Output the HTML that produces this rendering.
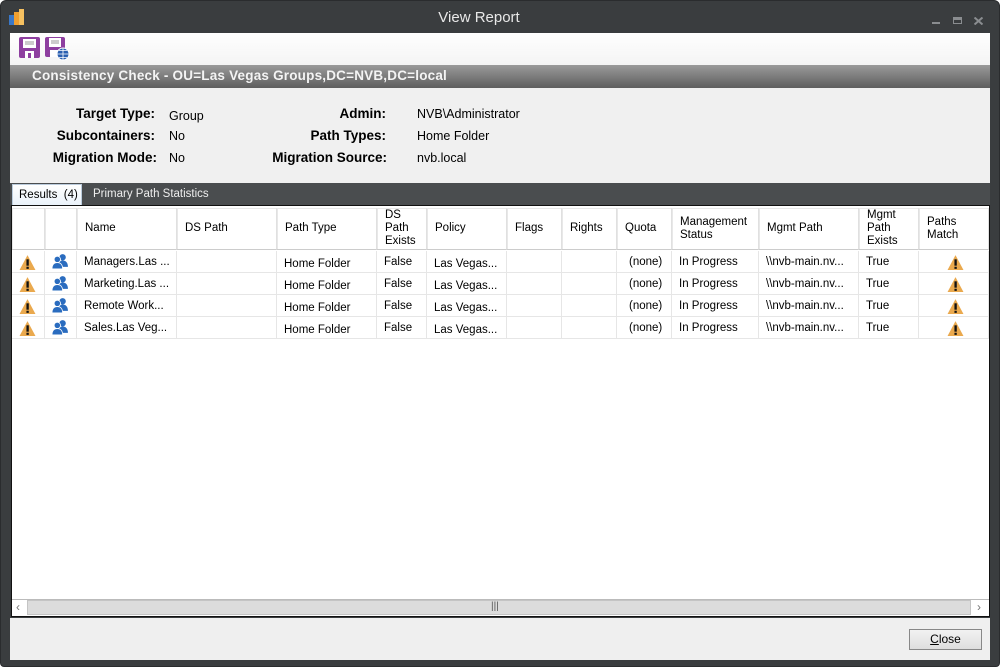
<!DOCTYPE html>
<html><head><meta charset="utf-8"><style>
*{margin:0;padding:0;box-sizing:border-box}
body{width:1002px;height:669px;background:#fff;font-family:"Liberation Sans",sans-serif;font-size:12px;color:#000;position:relative;overflow:hidden}
.a{position:absolute}
#frame{left:0;top:0;width:1000px;height:667px;background:#3a3d3f;border-radius:6px 6px 4px 4px;border:1px solid #2a2c2e}
.title{left:0;width:958px;top:9px;text-align:center;color:#e8e8e8;font-size:15px}
.lbl{font-weight:bold;font-size:13.5px;text-align:right}
.val{font-size:12.5px}
.grid{left:11px;top:205px;width:979px;height:412px;background:#fff;border:1px solid #111}
.hc{position:absolute;top:2px;height:42px;border-right:1px solid #e0e0e0;border-bottom:1px solid #ccc;background:#fff;font-size:11.5px;line-height:13px;padding-left:8px;display:flex;align-items:center;box-shadow:inset 1px 1px 0 #e8e8e8}
.c{position:absolute;height:22px;border-right:1px solid #e6e6e6;border-bottom:1px solid #e6e6e6;font-size:11.5px;padding-left:7px;line-height:22px;white-space:nowrap}
</style></head><body>
<div class="a" id="frame"></div>
<svg class="a" style="left:8px;top:8px" width="18" height="18" viewBox="0 0 18 18"><rect x="1" y="7" width="5" height="10" fill="#3a78c8"/><rect x="6" y="4" width="5" height="13" fill="#f0a030"/><rect x="11" y="1" width="5" height="16" fill="#f5c060"/></svg>
<div class="a title">View Report</div>
<div class="a" style="left:932px;top:22px;width:8px;height:2px;background:#8a8d90"></div>
<div class="a" style="left:953px;top:17px;width:9px;height:7px;border:1px solid #8a8d90;border-top-width:3px"></div>
<svg class="a" style="left:974px;top:17px" width="9" height="8" viewBox="0 0 9 8"><path d="M0.5 0.5L8.5 7.5M8.5 0.5L0.5 7.5" stroke="#8a8d90" stroke-width="2"/></svg>
<div class="a" style="left:10px;top:33px;width:980px;height:32px;background:linear-gradient(#fff,#f4f4f4)"></div>
<svg class="a" style="left:18px;top:36px" width="24" height="24" viewBox="0 0 24 24"><rect x="1" y="1" width="21" height="21" rx="2" fill="#8e3fa0"/><rect x="5" y="3" width="13" height="9" fill="#fff"/><line x1="7" y1="6" x2="16" y2="6" stroke="#999"/><line x1="7" y1="8" x2="16" y2="8" stroke="#999"/><rect x="7" y="15" width="9" height="7" fill="#fff"/><rect x="10" y="17" width="3" height="5" fill="#8e3fa0"/></svg>
<svg class="a" style="left:44px;top:35px" width="26" height="26" viewBox="0 0 26 26"><rect x="1" y="2" width="20" height="20" rx="2" fill="#8e3fa0"/><rect x="5" y="3" width="12" height="9" fill="#fff"/><line x1="7" y1="6" x2="15" y2="6" stroke="#999"/><line x1="7" y1="8" x2="15" y2="8" stroke="#999"/><rect x="6" y="15" width="8" height="7" fill="#fff"/><circle cx="19" cy="19" r="6" fill="#2a5fb0" stroke="#fff"/><path d="M13 19h12M19 13v12M15 15.5h8M15 22.5h8" stroke="#fff" stroke-width="0.8" fill="none"/></svg>
<div class="a" style="left:10px;top:65px;width:980px;height:23px;background:linear-gradient(#9a9a9a,#5e5e5e)"></div>
<div class="a" style="left:32px;top:68px;color:#f4f4f4;font-weight:bold;font-size:13.5px;letter-spacing:0.2px">Consistency Check - OU=Las Vegas Groups,DC=NVB,DC=local</div>
<div class="a" style="left:10px;top:88px;width:980px;height:95px;background:#f0f0f0"></div>
<div class="a lbl" style="left:10px;width:145px;top:106px">Target Type:</div>
<div class="a lbl" style="left:10px;width:145px;top:128px">Subcontainers:</div>
<div class="a lbl" style="left:10px;width:147px;top:150px">Migration Mode:</div>
<div class="a val" style="left:169px;top:109px">Group</div>
<div class="a val" style="left:169px;top:129px">No</div>
<div class="a val" style="left:169px;top:151px">No</div>
<div class="a lbl" style="left:220px;width:166px;top:106px">Admin:</div>
<div class="a lbl" style="left:220px;width:166px;top:128px">Path Types:</div>
<div class="a lbl" style="left:220px;width:167px;top:150px">Migration Source:</div>
<div class="a val" style="left:417px;top:107px">NVB\Administrator</div>
<div class="a val" style="left:417px;top:129px">Home Folder</div>
<div class="a val" style="left:417px;top:151px">nvb.local</div>
<div class="a" style="left:10px;top:183px;width:980px;height:22px;background:#4a4d4f"></div>
<div class="a" style="left:12px;top:184px;width:70px;height:21px;background:linear-gradient(#fff,#eaf2fa);border:1px solid #bcd;border-bottom:none;font-size:11.5px;padding:4px 0 0 6px">Results&nbsp; (4)</div>
<div class="a" style="left:93px;top:188px;color:#eee;font-size:11.5px">Primary Path Statistics</div>
<div class="a grid">
<div class="hc" style="left:0;width:33px"></div>
<div class="hc" style="left:33px;width:32px"></div>
<div class="hc" style="left:65px;width:100px">Name</div>
<div class="hc" style="left:165px;width:100px">DS Path</div>
<div class="hc" style="left:265px;width:100px">Path Type</div>
<div class="hc" style="left:365px;width:50px">DS<br>Path<br>Exists</div>
<div class="hc" style="left:415px;width:80px">Policy</div>
<div class="hc" style="left:495px;width:55px">Flags</div>
<div class="hc" style="left:550px;width:55px">Rights</div>
<div class="hc" style="left:605px;width:55px">Quota</div>
<div class="hc" style="left:660px;width:87px">Management<br>Status</div>
<div class="hc" style="left:747px;width:100px">Mgmt Path</div>
<div class="hc" style="left:847px;width:60px">Mgmt<br>Path<br>Exists</div>
<div class="hc" style="left:907px;width:70px">Paths<br>Match</div>
</div>
<svg width="0" height="0" style="position:absolute"><defs>
<symbol id="w" viewBox="0 0 16 16"><path d="M8 1L15.5 15H0.5Z" fill="#eaa94e"/><rect x="7" y="5" width="2.2" height="6" fill="#111"/><rect x="7" y="12" width="2.2" height="2" fill="#111"/></symbol>
<symbol id="g" viewBox="0 0 16 16"><circle cx="10" cy="4" r="3" fill="#2a6cbf"/><path d="M5 13c0-4 2-6 5-6s5 2 5 6z" fill="#2a6cbf"/><circle cx="5" cy="6" r="3" fill="#2a6cbf" stroke="#fff" stroke-width="0.8"/><path d="M0 15c0-4 2-6 5-6s5 2 5 6z" fill="#2a6cbf" stroke="#fff" stroke-width="0.8"/></symbol>
</defs></svg>
<div class="a" style="left:12px;top:251px;width:977px">
<div style="position:relative;height:88px">
<div class="c" style="left:0;top:0;width:33px"></div><div class="c" style="left:33px;top:0;width:32px"></div><div class="c" style="left:65px;top:0;width:100px">Managers.Las ...</div><div class="c" style="left:165px;top:0;width:100px"></div><div class="c" style="left:265px;top:0;width:100px;line-height:26px">Home Folder</div><div class="c" style="left:365px;top:0;width:50px">False</div><div class="c" style="left:415px;top:0;width:80px;line-height:26px">Las Vegas...</div><div class="c" style="left:495px;top:0;width:55px"></div><div class="c" style="left:550px;top:0;width:55px"></div><div class="c" style="left:605px;top:0;width:55px;padding-left:12px">(none)</div><div class="c" style="left:660px;top:0;width:87px">In Progress</div><div class="c" style="left:747px;top:0;width:100px">\\nvb-main.nv...</div><div class="c" style="left:847px;top:0;width:60px">True</div><div class="c" style="left:907px;top:0;width:70px"></div>
<div class="c" style="left:0;top:22px;width:33px"></div><div class="c" style="left:33px;top:22px;width:32px"></div><div class="c" style="left:65px;top:22px;width:100px">Marketing.Las ...</div><div class="c" style="left:165px;top:22px;width:100px"></div><div class="c" style="left:265px;top:22px;width:100px;line-height:26px">Home Folder</div><div class="c" style="left:365px;top:22px;width:50px">False</div><div class="c" style="left:415px;top:22px;width:80px;line-height:26px">Las Vegas...</div><div class="c" style="left:495px;top:22px;width:55px"></div><div class="c" style="left:550px;top:22px;width:55px"></div><div class="c" style="left:605px;top:22px;width:55px;padding-left:12px">(none)</div><div class="c" style="left:660px;top:22px;width:87px">In Progress</div><div class="c" style="left:747px;top:22px;width:100px">\\nvb-main.nv...</div><div class="c" style="left:847px;top:22px;width:60px">True</div><div class="c" style="left:907px;top:22px;width:70px"></div>
<div class="c" style="left:0;top:44px;width:33px"></div><div class="c" style="left:33px;top:44px;width:32px"></div><div class="c" style="left:65px;top:44px;width:100px">Remote Work...</div><div class="c" style="left:165px;top:44px;width:100px"></div><div class="c" style="left:265px;top:44px;width:100px;line-height:26px">Home Folder</div><div class="c" style="left:365px;top:44px;width:50px">False</div><div class="c" style="left:415px;top:44px;width:80px;line-height:26px">Las Vegas...</div><div class="c" style="left:495px;top:44px;width:55px"></div><div class="c" style="left:550px;top:44px;width:55px"></div><div class="c" style="left:605px;top:44px;width:55px;padding-left:12px">(none)</div><div class="c" style="left:660px;top:44px;width:87px">In Progress</div><div class="c" style="left:747px;top:44px;width:100px">\\nvb-main.nv...</div><div class="c" style="left:847px;top:44px;width:60px">True</div><div class="c" style="left:907px;top:44px;width:70px"></div>
<div class="c" style="left:0;top:66px;width:33px"></div><div class="c" style="left:33px;top:66px;width:32px"></div><div class="c" style="left:65px;top:66px;width:100px">Sales.Las Veg...</div><div class="c" style="left:165px;top:66px;width:100px"></div><div class="c" style="left:265px;top:66px;width:100px;line-height:26px">Home Folder</div><div class="c" style="left:365px;top:66px;width:50px">False</div><div class="c" style="left:415px;top:66px;width:80px;line-height:26px">Las Vegas...</div><div class="c" style="left:495px;top:66px;width:55px"></div><div class="c" style="left:550px;top:66px;width:55px"></div><div class="c" style="left:605px;top:66px;width:55px;padding-left:12px">(none)</div><div class="c" style="left:660px;top:66px;width:87px">In Progress</div><div class="c" style="left:747px;top:66px;width:100px">\\nvb-main.nv...</div><div class="c" style="left:847px;top:66px;width:60px">True</div><div class="c" style="left:907px;top:66px;width:70px"></div>
<svg style="position:absolute;left:7px;top:3px" width="17" height="17"><use href="#w"/></svg>
<svg style="position:absolute;left:7px;top:25px" width="17" height="17"><use href="#w"/></svg>
<svg style="position:absolute;left:7px;top:47px" width="17" height="17"><use href="#w"/></svg>
<svg style="position:absolute;left:7px;top:69px" width="17" height="17"><use href="#w"/></svg>
<svg style="position:absolute;left:40px;top:2px" width="17" height="17"><use href="#g"/></svg>
<svg style="position:absolute;left:40px;top:24px" width="17" height="17"><use href="#g"/></svg>
<svg style="position:absolute;left:40px;top:46px" width="17" height="17"><use href="#g"/></svg>
<svg style="position:absolute;left:40px;top:68px" width="17" height="17"><use href="#g"/></svg>
<svg style="position:absolute;left:935px;top:3px" width="17" height="17"><use href="#w"/></svg>
<svg style="position:absolute;left:935px;top:25px" width="17" height="17"><use href="#w"/></svg>
<svg style="position:absolute;left:935px;top:47px" width="17" height="17"><use href="#w"/></svg>
<svg style="position:absolute;left:935px;top:69px" width="17" height="17"><use href="#w"/></svg>
</div></div>
<div class="a" style="left:12px;top:599px;width:977px;height:17px;background:#fff;border-top:1px solid #bbb"></div>
<div class="a" style="left:27px;top:600px;width:944px;height:15px;background:#dcdcdc;border:1px solid #c4c4c4"></div>
<div class="a" style="left:16px;top:600px;color:#777;font-size:12px">‹</div>
<div class="a" style="left:977px;top:600px;color:#777;font-size:12px">›</div>
<div class="a" style="left:491px;top:601px;color:#555;font-size:10px">|||</div>
<div class="a" style="left:10px;top:618px;width:980px;height:42px;background:#efefef"></div>
<div class="a" style="left:909px;top:629px;width:73px;height:21px;background:linear-gradient(#f2f2f2,#dedede);border:1px solid #888;text-align:center;line-height:19px;font-size:12px"><u>C</u>lose</div>
</body></html>
